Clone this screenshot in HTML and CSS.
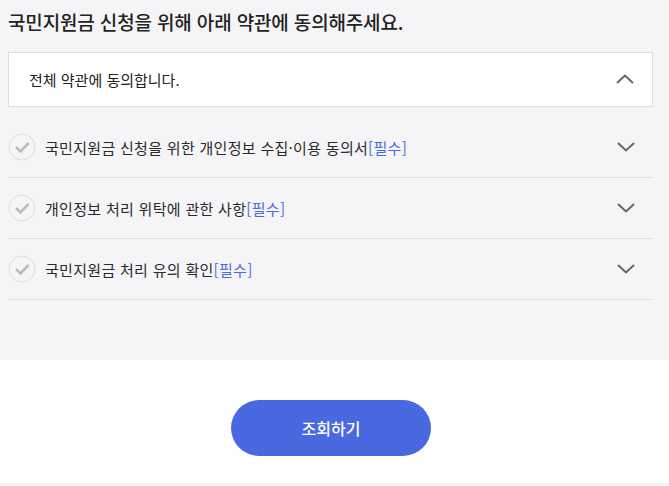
FILE: index.html
```html
<!DOCTYPE html>
<html lang="ko">
<head>
<meta charset="utf-8">
<link rel="stylesheet" href="styles.css">
</head>
<body>
<div class="top">
  <h1 class="title">국민지원금 신청을 위해 아래 약관에 동의해주세요.</h1>
  <div class="all">
    <span>전체 약관에 동의합니다.</span>
    <svg class="chev" width="18" height="10" viewBox="0 0 18 10"><path d="M1 9 L9 1.5 L17 9" fill="none" stroke="#666" stroke-width="2"/></svg>
  </div>
  <ul class="list">
    <li class="row">
      <svg class="check" width="28" height="28" viewBox="0 0 28 28"><circle cx="14" cy="14" r="13" fill="none" stroke="#ddd" stroke-width="1"/><path d="M8 14 L12.5 18.5 L20.5 10" fill="none" stroke="#bbb" stroke-width="2.6"/></svg>
      <span class="label">국민지원금 신청을 위한 개인정보 수집·이용 동의서<em>[필수]</em></span>
      <svg class="chev" width="18" height="10" viewBox="0 0 18 10"><path d="M1 1 L9 8.5 L17 1" fill="none" stroke="#666" stroke-width="2"/></svg>
    </li>
    <li class="row">
      <svg class="check" width="28" height="28" viewBox="0 0 28 28"><circle cx="14" cy="14" r="13" fill="none" stroke="#ddd" stroke-width="1"/><path d="M8 14 L12.5 18.5 L20.5 10" fill="none" stroke="#bbb" stroke-width="2.6"/></svg>
      <span class="label">개인정보 처리 위탁에 관한 사항<em>[필수]</em></span>
      <svg class="chev" width="18" height="10" viewBox="0 0 18 10"><path d="M1 1 L9 8.5 L17 1" fill="none" stroke="#666" stroke-width="2"/></svg>
    </li>
    <li class="row">
      <svg class="check" width="28" height="28" viewBox="0 0 28 28"><circle cx="14" cy="14" r="13" fill="none" stroke="#ddd" stroke-width="1"/><path d="M8 14 L12.5 18.5 L20.5 10" fill="none" stroke="#bbb" stroke-width="2.6"/></svg>
      <span class="label">국민지원금 처리 유의 확인<em>[필수]</em></span>
      <svg class="chev" width="18" height="10" viewBox="0 0 18 10"><path d="M1 1 L9 8.5 L17 1" fill="none" stroke="#666" stroke-width="2"/></svg>
    </li>
  </ul>
</div>
<div class="bottom">
  <button class="btn">조회하기</button>
</div>
<div class="foot"></div>
</body>
</html>
```
FILE: styles.css
```css
html, body {
  margin: 0;
  padding: 0;
  background: #fff;
  font-family: "Noto Sans CJK KR", "Noto Sans", sans-serif;
  color: #222;
}
.top {
  background: #f5f5f7;
  height: 360px;
  padding: 0 16px 0 8px;
  box-sizing: border-box;
  display: flex;
  flex-direction: column;
}
.title {
  margin: 0;
  padding-top: 8px;
  height: 52px;
  box-sizing: border-box;
  font-size: 19px;
  font-weight: 500;
  line-height: 28px;
  letter-spacing: -0.15px;
  color: #222;
}
.all {
  height: 55px;
  flex: none;
  box-sizing: border-box;
  background: #fff;
  border: 1px solid #ddd;
  display: flex;
  align-items: center;
  justify-content: space-between;
  padding: 0 18px 0 20px;
  font-size: 15px;
  color: #222;
}
.all .chev { margin-top: -1px; }
.list {
  list-style: none;
  margin: 10px 0 0;
  padding: 0;
}
.row {
  height: 61px;
  box-sizing: border-box;
  border-bottom: 1px solid #ddd;
  display: flex;
  align-items: center;
  padding: 0 18px 0 0;
}
.check { flex: none; margin-right: 9px; }
.label {
  flex: 1;
  font-size: 15px;
  letter-spacing: 0.3px;
  color: #2a2a2a;
}
.label em {
  font-style: normal;
  color: #4a6be0;
}
.bottom {
  height: 123px;
  display: flex;
  justify-content: center;
  padding-top: 40px;
  box-sizing: border-box;
}
.btn {
  width: 200px;
  height: 56px;
  border: none;
  border-radius: 28px;
  background: #4869e0;
  color: #fff;
  font-family: "Noto Sans CJK KR", sans-serif;
  font-size: 16px;
  font-weight: 500;
  margin-left: -7px;
}
.foot {
  height: 3px;
  background: #f5f5f5;
}
```
